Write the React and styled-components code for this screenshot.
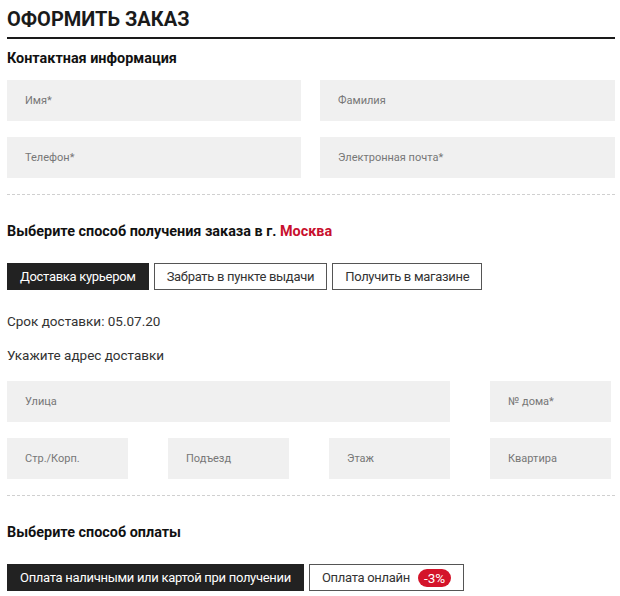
import React from 'react';
import styled, { createGlobalStyle } from 'styled-components';

const GlobalStyle = createGlobalStyle`
  body {
    margin: 0;
    background: #fff;
    font-family: Roboto, "Liberation Sans", Arial, sans-serif;
    color: #222;
  }
`;

const Page = styled.div`
  width: 608px;
  padding: 5px 0 0 7px;
`;

const Title = styled.h1`
  margin: 0;
  padding-bottom: 4px;
  font-size: 20px;
  line-height: 28px;
  font-weight: 700;
  color: #1a1a1a;
  border-bottom: 2px solid #1a1a1a;
`;

const Heading = styled.h2`
  margin: ${({ top }) => top}px 0 0;
  font-size: 14.4px;
  line-height: 20px;
  font-weight: 700;
  color: #111;
`;

const City = styled.span`
  color: #c8102e;
`;

const Grid = styled.div`
  display: grid;
  grid-template-columns: ${({ cols }) => cols};
  column-gap: ${({ gap }) => gap}px;
  row-gap: 16px;
  margin-top: ${({ top }) => top}px;
`;

const Field = styled.div`
  grid-column: ${({ span }) => (span ? `span ${span}` : 'auto')};
  height: 41px;
  background: #f0f0f0;
  display: flex;
  align-items: center;
  padding-left: 18px;
  font-size: 11px;
  color: #777;
`;

const Divider = styled.div`
  margin-top: 16px;
  border-top: 1px dashed #d0d0d0;
`;

const Tabs = styled.div`
  display: flex;
  gap: 5px;
  margin-top: 21px;
`;

const Tab = styled.div`
  box-sizing: border-box;
  height: 27px;
  display: flex;
  align-items: center;
  gap: 8px;
  padding: 0 12px;
  font-size: 13px;
  letter-spacing: -0.3px;
  border: 1px solid ${({ active }) => (active ? '#222' : '#555')};
  background: ${({ active }) => (active ? '#222' : '#fff')};
  color: ${({ active }) => (active ? '#fff' : '#333')};
`;

const Badge = styled.span`
  background: #d4142a;
  color: #fff;
  font-size: 13.5px;
  line-height: 18px;
  letter-spacing: 0;
  padding: 0 6px;
  border-radius: 9px;
`;

const Text = styled.p`
  margin: ${({ top }) => top}px 0 0;
  font-size: 13.5px;
  line-height: 20px;
  color: #333;
`;

export default function App() {
  return (
    <Page>
      <GlobalStyle />
      <Title>ОФОРМИТЬ ЗАКАЗ</Title>

      <Heading top={10}>Контактная информация</Heading>
      <Grid cols="294px 295px" gap={19} top={11}>
        <Field>Имя*</Field>
        <Field>Фамилия</Field>
        <Field>Телефон*</Field>
        <Field>Электронная почта*</Field>
      </Grid>

      <Divider />

      <Heading top={27}>
        Выберите способ получения заказа в г. <City>Москва</City>
      </Heading>
      <Tabs>
        <Tab active>Доставка курьером</Tab>
        <Tab>Забрать в пункте выдачи</Tab>
        <Tab>Получить в магазине</Tab>
      </Tabs>

      <Text top={21}>Срок доставки: 05.07.20</Text>
      <Text top={14}>Укажите адрес доставки</Text>

      <Grid cols="repeat(4, 121px)" gap={40} top={16}>
        <Field span={3}>Улица</Field>
        <Field>№ дома*</Field>
        <Field>Стр./Корп.</Field>
        <Field>Подъезд</Field>
        <Field>Этаж</Field>
        <Field>Квартира</Field>
      </Grid>

      <Divider />

      <Heading top={27}>Выберите способ оплаты</Heading>
      <Tabs>
        <Tab active>Оплата наличными или картой при получении</Tab>
        <Tab>
          Оплата онлайн <Badge>-3%</Badge>
        </Tab>
      </Tabs>
    </Page>
  );
}
